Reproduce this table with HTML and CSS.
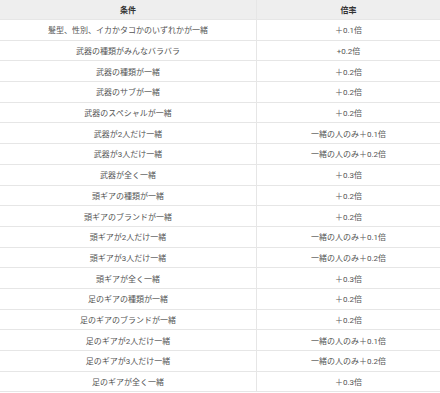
FILE: index.html
```html
<!DOCTYPE html>
<html lang="ja">
<head>
<meta charset="utf-8">
<link rel="stylesheet" href="styles.css">
</head>
<body>
<table class="bonus">
  <thead>
    <tr><th class="cond">条件</th><th class="rate">倍率</th></tr>
  </thead>
  <tbody>
    <tr><td>髪型、性別、イカかタコかのいずれかが一緒</td><td>＋0.1倍</td></tr>
    <tr><td>武器の種類がみんなバラバラ</td><td>+0.2倍</td></tr>
    <tr><td>武器の種類が一緒</td><td>＋0.2倍</td></tr>
    <tr><td>武器のサブが一緒</td><td>＋0.2倍</td></tr>
    <tr><td>武器のスペシャルが一緒</td><td>＋0.2倍</td></tr>
    <tr><td>武器が2人だけ一緒</td><td>一緒の人のみ＋0.1倍</td></tr>
    <tr><td>武器が3人だけ一緒</td><td>一緒の人のみ＋0.2倍</td></tr>
    <tr><td>武器が全く一緒</td><td>＋0.3倍</td></tr>
    <tr><td>頭ギアの種類が一緒</td><td>＋0.2倍</td></tr>
    <tr><td>頭ギアのブランドが一緒</td><td>＋0.2倍</td></tr>
    <tr><td>頭ギアが2人だけ一緒</td><td>一緒の人のみ＋0.1倍</td></tr>
    <tr><td>頭ギアが3人だけ一緒</td><td>一緒の人のみ＋0.2倍</td></tr>
    <tr><td>頭ギアが全く一緒</td><td>＋0.3倍</td></tr>
    <tr><td>足のギアの種類が一緒</td><td>＋0.2倍</td></tr>
    <tr><td>足のギアのブランドが一緒</td><td>＋0.2倍</td></tr>
    <tr><td>足のギアが2人だけ一緒</td><td>一緒の人のみ＋0.1倍</td></tr>
    <tr><td>足のギアが3人だけ一緒</td><td>一緒の人のみ＋0.2倍</td></tr>
    <tr><td>足のギアが全く一緒</td><td>＋0.3倍</td></tr>
  </tbody>
</table>
</body>
</html>
```

FILE: styles.css
```css
html, body {
  margin: 0;
  padding: 0;
  background: #ffffff;
}

.bonus {
  width: 440px;
  border-collapse: collapse;
  table-layout: fixed;
  font-family: Roboto, "Noto Sans CJK JP", sans-serif;
  font-size: 8px;
  color: #555555;
}

.bonus th,
.bonus td {
  padding: 0;
  text-align: center;
  vertical-align: middle;
  border-bottom: 1px solid #e6e6e6;
  white-space: nowrap;
}

.bonus th {
  height: 19px;
  background: #eeeeee;
  color: #333333;
  font-weight: bold;
}

.bonus td {
  height: 19.7px;
}

.bonus th + th,
.bonus td + td {
  border-left: 1px solid #e6e6e6;
}

.cond {
  width: 256px;
}
```
